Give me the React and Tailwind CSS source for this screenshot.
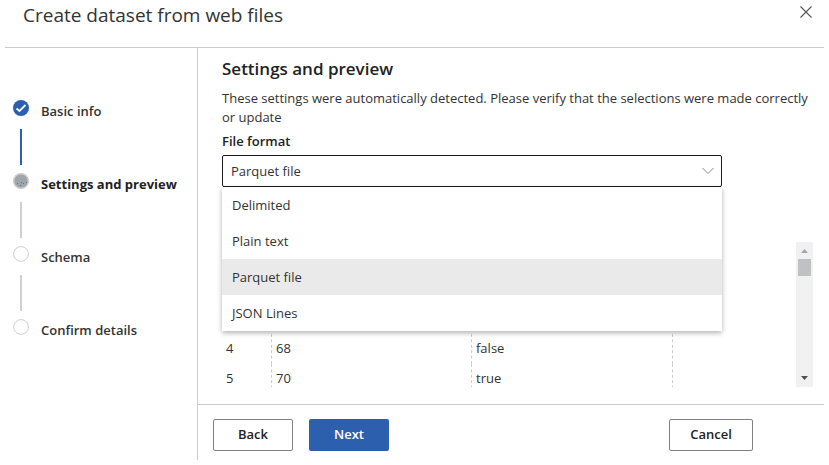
import { useState } from "react";

const formats = ["Delimited", "Plain text", "Parquet file", "JSON Lines"];

const steps = [
  { label: "Basic info", state: "done" },
  { label: "Settings and preview", state: "current" },
  { label: "Schema", state: "todo" },
  { label: "Confirm details", state: "todo" },
];

const rows = [
  { id: 4, value: "68", flag: "false" },
  { id: 5, value: "70", flag: "true" },
];

function StepMarker({ state }) {
  if (state === "done") {
    return (
      <svg className="size-4" viewBox="0 0 16 16" aria-hidden="true">
        <circle cx="8" cy="8" r="8" fill="#2c5fad" />
        <path d="M3.5 8.5 6.5 11 12.500 5" fill="none" stroke="#f3f3f3" strokeWidth="1.9" />
      </svg>
    );
  }
  if (state === "current") {
    return (
      <svg className="size-4" viewBox="0 0 16 16" aria-hidden="true">
        <circle cx="8" cy="8" r="7.3" fill="#a0a5aa" stroke="#cbcbcb" strokeWidth="1.4" />
        <path
          d="M4 10h1v1H4zM7 12h1v1H7zM8 9h1v1H8zM10 10h1v1h-1zM13 9h1v1h-1z"
          fill="#4f76b4"
        />
      </svg>
    );
  }
  return (
    <svg className="size-4" viewBox="0 0 16 16" aria-hidden="true">
      <circle cx="8" cy="8" r="7.4" fill="#fff" stroke="#cfcfcf" strokeWidth="1" />
    </svg>
  );
}

function Steps() {
  return (
    <nav aria-label="Steps" className="w-[193px] shrink-0 border-r border-[#cccccc] pt-[52px] pl-2">
      <ol>
        {steps.map((step, i) => (
          <li key={step.label} className="flex h-[73px] gap-3">
            <div className="flex w-4 flex-col items-center gap-[13px]">
              <StepMarker state={step.state} />
              {i < steps.length - 1 && (
                <span className={step.state === "done" ? "h-9 w-[2px] bg-[#2c5fad]" : "h-9 w-[2px] bg-[#d0d0d0]"} />
              )}
            </div>
            <span
              className={
                step.state === "current"
                  ? "pt-px text-[13px] leading-5 font-bold whitespace-nowrap"
                  : "pt-px text-[13px] leading-5 font-semibold whitespace-nowrap text-[#333333]"
              }
            >
              {step.label}
            </span>
          </li>
        ))}
      </ol>
    </nav>
  );
}

function FormatPicker() {
  const [format, setFormat] = useState("Parquet file");
  return (
    <div>
      <label htmlFor="format" className="block text-[13px] leading-5 font-semibold">
        File format
      </label>
      <div className="relative mt-1 w-[500px]">
        <select
          id="format"
          value={format}
          onChange={(e) => setFormat(e.target.value)}
          className="block h-8 w-full appearance-none rounded-[2px] border border-[#1b1b1b] bg-white px-2 pt-[2px] text-[13px] text-[#333333]"
        >
          {formats.map((name) => (
            <option key={name}>{name}</option>
          ))}
        </select>
        <svg className="pointer-events-none absolute top-3 right-2 h-2 w-3" viewBox="0 0 12 8" aria-hidden="true">
          <path d="M.5 1 6 6.5 11.500 1" fill="none" stroke="#85888c" strokeWidth="1" />
        </svg>
        <ul
          role="listbox"
          aria-label="File format"
          className="absolute top-full left-0 z-10 w-full bg-white shadow-[0_2px_5px_rgba(0,0,0,0.3)]"
        >
          {formats.map((name) => (
            <li
              key={name}
              role="option"
              aria-selected={name === format}
              onClick={() => setFormat(name)}
              className="flex h-9 items-center px-[10px] pt-[2px] text-[13px] text-[#333333] aria-selected:bg-[#eaeaea]"
            >
              {name}
            </li>
          ))}
        </ul>
      </div>
    </div>
  );
}

function Preview() {
  return (
    <div className="mt-[55px] mr-[11px] flex h-[145px] overflow-hidden">
      <div className="flex-1 overflow-hidden pt-[92px]">
        <table className="w-full table-fixed border-separate border-spacing-0 text-[13px] text-[#333333]">
          <colgroup>
            <col className="w-[50px]" />
            <col className="w-[200px]" />
            <col className="w-[201px]" />
            <col />
          </colgroup>
          <tbody>
            {rows.map((row) => (
              <tr key={row.id} className="h-[30px]">
                <td className="border-r border-dashed border-[#cccccc] p-0 pl-1">{row.id}</td>
                <td className="border-r border-dashed border-[#cccccc] p-0 pl-1">{row.value}</td>
                <td className="border-r border-dashed border-[#cccccc] p-0 pl-1">{row.flag}</td>
                <td />
              </tr>
            ))}
          </tbody>
        </table>
      </div>
      <div className="flex w-[17px] flex-col items-center justify-between bg-[#f1f1f1]">
        <div className="flex flex-col items-center">
          <svg className="h-[17px] w-[17px]" viewBox="0 0 17 17" aria-hidden="true">
            <path d="M5 11 8.500 7 12 11z" fill="#a3a6aa" />
          </svg>
          <span className="h-[17px] w-[13px] bg-[#bfc1c4]" />
        </div>
        <svg className="h-[17px] w-[17px]" viewBox="0 0 17 17" aria-hidden="true">
          <path d="M5 6 8.500 10 12 6z" fill="#505050" />
        </svg>
      </div>
    </div>
  );
}

export default function App() {
  return (
    <div className="bg-white px-[5px] font-['Open_Sans','Noto_Sans',sans-serif] text-[#222222]">
      <header className="flex h-12 items-start justify-between border-b border-[#cccccc] pt-[3px] pr-[11px] pl-[18px]">
        <h1 className="text-[19px] leading-6 text-[#333333]">Create dataset from web files</h1>
        <button type="button" aria-label="Close" className="mt-[2px]">
          <svg className="size-[14px]" viewBox="0 0 14 14" aria-hidden="true">
            <path d="M1.500 1.500 12.500 12.500M12.500 1.500 1.500 12.500" fill="none" stroke="#555555" strokeWidth="1.1" />
          </svg>
        </button>
      </header>
      <div className="flex">
        <Steps />
        <main className="min-w-0 flex-1">
          <div className="pt-[9px] pl-6">
            <h2 className="text-[17px] leading-6 font-semibold">Settings and preview</h2>
            <p className="mt-2 mb-1 text-[13px] leading-[19px] text-[#333333]">
              These settings were automatically detected. Please verify that the selections were made correctly or
              update
            </p>
            <FormatPicker />
            <Preview />
          </div>
          <footer className="mt-[17px] flex gap-4 border-t border-[#cccccc] pt-[14px] pr-[71px] pb-[9px] pl-[15px] text-[13px] font-semibold">
            <button type="button" className="h-8 w-20 rounded-[2px] border border-[#808080]">
              Back
            </button>
            <button type="button" className="h-8 w-20 rounded-[2px] bg-[#2c5fad] text-white">
              Next
            </button>
            <button type="button" className="ml-auto h-8 w-[84px] rounded-[2px] border border-[#808080]">
              Cancel
            </button>
          </footer>
        </main>
      </div>
    </div>
  );
}
